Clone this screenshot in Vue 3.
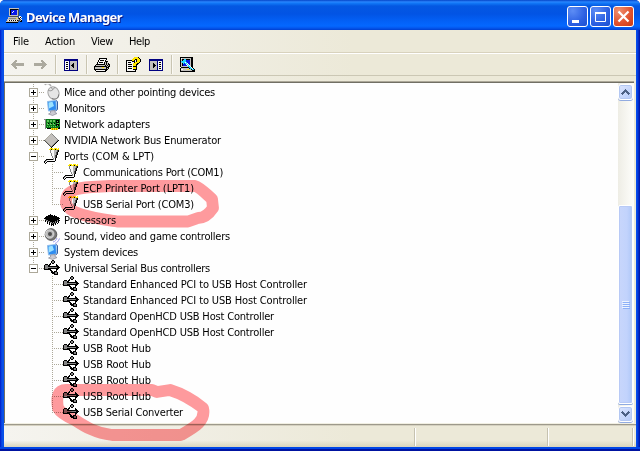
<script setup>
import { h } from 'vue'

const palette = {
  k: '#000000', g: '#858585', l: '#b8b8b8', w: '#f8f8f8', y: '#ffe600', d: '#505050',
  n: '#000080', b: '#0818e8', c: '#20d8ff', G: '#087a18', L: '#63c85c', s: '#c3c0bd', o: '#b89a00', a: '#acaa9f'
}
const grids = {
  usb: [
    '........kk......', '.......kggk.....', '.......kggk.....', '......k.kk......',
    '.kkk.kk.....k...', 'kgggkk......kk..', 'kgggkkkkkkkkkkk.', 'kggggggggggggkkk',
    'kgggkkkkkkkkkkk.', 'kkkkkkk.....kk..', '......kk....k...', '.......kk.kkk...',
    '.......kkkkggk..', '........kkkggk..', '..........kkkk..'
  ],
  port: [
    '......yyy.yyy.y.', '.....yykyyykyyy.', '......gwwwllldk.', '......gwwwllldk.',
    '......gwwwlldk..', '.......gwwlldk..', '.......gwwlldk..', '.......gwwldk...',
    '........gwldk...', '........gwldk...', '.........gwk....', '..kkkkkkkgwk....',
    '.kgwwwwwwwwk....', 'kgwkkkkkkkk.....', 'kwk.............', '.k..............'
  ],
  network: [
    '................', '................', '................', 'ggGGGGGGGGGGGGGG',
    '.gGLLGLLGLLGkkkG', '.gGLLGLLGLLGkLkG', '.gGGGGGGGGGGkkkG', '.gGLkGLkGLkGGLLG',
    '.gGLLGLLGLLGkkkG', '.gGGGGGGGGGGkLkG', '.gGLGLGLGLGLGGGG', '.gGGGGGGGGGGGGGk',
    '.g.kkkkyoyoyoykk', '.......yoyoyoy..'
  ],
  cpu: [
    '................', '................', '......k.........', '....kkkkk.k.....',
    '..kkkkkkkkkkk...', '.kkkkkkkkkkkkkk.', 'kkkkkkkkkkkkkkkk', '.gkkkkkkkkkkkkk.',
    '.kggkkkkkkkkkgkk', '.k.kggkkkkkgkgk.', '...k.kggkgkgk.k.', '...k.k.kgkgk.k..',
    '.....k.kkk.k....', '.......k.k......'
  ],
  diamond: [
    '................', '.......a........', '......asg.......', '.....asssg......',
    '....asssssg.....', '...asssssssg....', '..asssssssssg...', '.asssssssssssg..',
    'dasssssssssssgk.', '.dasssssssssgk..', '..dasssssssgk...', '...dasssssgk....',
    '....dasssgk.....', '.....dasgk......', '......dgk.......', '.......k........'
  ],
  app: [
    '...ssssssssss...', '...skkkkkkkkd...', '...skbbbbbbsd...', '...skbbwbbbsd...',
    '...skbwbbbbsd...', '...skbbbbbbsd...', '...skbbbbbbsd...', '...sssssssssd...',
    '....dddddddd.ww.', '..ssssssssssdwkw', '..sgggggggysdkw.', '.ssssssssssssddw',
    '.swkwkwkwkwkddsk', 'ssssssssssssd.kk', 'kkkkkkkkkkkk....'
  ],
  print: [
    '................', '.....kkkkkkkk...', '.....kwwwwwwk...', '....kwkkkkwk....',
    '....kwwwwwwkkk..', '...kwkkkkwksks..', '...kwwwwwwksksk.', '..kkkkkkkkkskskk',
    '.ksssssssssksksk', 'kkkkkkkkkkkkkskk', 'ksssssssyysskkk.', 'ksssssssssssksk.',
    'kkkkkkkkkkkkkk..', '.kwwwwwwwwwkk...', '..kkkkkkkkkk....'
  ],
  help: [
    '........yyyyk...', '.......yyyyyyk..', '......yyykkyyyk.', 'kkkkkkyyk.kyyyk.',
    'kwwwwwkkk.kyyyk.', 'kwkkkwwwkyyyyk..', 'kwwwwwwyyyykk...', 'kwkkkkwyyykk....',
    'kwwwwwwyyyk.....', 'kwkkkkwkkkk.....', 'kwwwwwwyyyk.....', 'kwkkkkwyyyk.....',
    'kwwwwwwkkkk.....', 'kwwwwwwwwk......', 'kkkkkkkkkk......'
  ],
  paneL: [
    'nnnnnnnnnnnnnn', 'nnnnnnnnnnnnnn', 'nwwwwnsssssssn', 'nwkkwnsssssssn', 'nwwwwnsssksssn',
    'nwkkwnsskksssn', 'nwwwwnskkksssn', 'nwkkwnsskksssn', 'nwwwwnsssksssn', 'nwkkwnsssssssn',
    'nwwwwnsssssssn', 'nnnnnnnnnnnnnn'
  ],
  paneR: [
    'nnnnnnnnnnnnnn', 'nnnnnnnnnnnnnn', 'nsssssssnwwwwn', 'nsssssssnwkkwn', 'nsssksssnwwwwn',
    'nssskkssnwkkwn', 'nssskkksnwwwwn', 'nssskkssnwkkwn', 'nsssksssnwwwwn', 'nsssssssnwkkwn',
    'nsssssssnwwwwn', 'nnnnnnnnnnnnnn'
  ],
  scan: [
    'kkkkkkkkkkkkk..', 'kwssssssssskk..', 'kskkcckkkkskk..', 'kskcccbbbbskk..',
    'kcccccbbbbskk..', 'kscccwcbbbskk..', 'kskcbccwbbskk..', 'kskbbbwcwbskk..',
    'kskbbbbwcwskk..', 'ksssssssccwkk..', '.kkkkkkkkccwk..', 'ksssssssskccwk.',
    'kwwssssyysskcck', 'kssssssssssskkk', 'kkkkkkkkkkkkkkk'
  ],
  back: [
    '....aa........', '...aaa........', '..aaa.........', '.aaaaaaaaaaaa.',
    'aaaaaaaaaaaaa.', '.aaaaaaaaaaaa.', '..aaa.........', '...aaa........', '....aa........'
  ],
  up: ['....k....', '...kkk...', '..kkkkk..', '.kkk.kkk.', 'kkk...kkk', '.k.....k.']
}
grids.forward = grids.back.map(r => [...r].reverse().join(''))
grids.down = [...grids.up].reverse()

const PixelIcon = ({ name, tint }) => {
  const rows = grids[name]
  const cells = []
  rows.forEach((row, y) => {
    let x = 0
    while (x < row.length) {
      let end = x + 1
      while (end < row.length && row[end] === row[x]) end++
      if (row[x] !== '.') cells.push(h('rect', { x, y, width: end - x, height: 1, fill: tint || palette[row[x]] }))
      x = end
    }
  })
  return h('svg', { width: rows[0].length, height: rows.length, 'shape-rendering': 'crispEdges' }, cells)
}
PixelIcon.props = ['name', 'tint']

const hub = 'Standard Enhanced PCI to USB Host Controller'
const open = 'Standard OpenHCD USB Host Controller'
const tree = [
  { t: 'Mice and other pointing devices', w: 151, i: 'mouse' },
  { t: 'Monitors', w: 41, i: 'monitor' },
  { t: 'Network adapters', w: 86, i: 'network' },
  { t: 'NVIDIA Network Bus Enumerator', w: 157, i: 'diamond' },
  {
    t: 'Ports (COM & LPT)', w: 90, i: 'port', kids: [
      { t: 'Communications Port (COM1)', w: 140 },
      { t: 'ECP Printer Port (LPT1)', w: 111 },
      { t: 'USB Serial Port (COM3)', w: 111 }
    ]
  },
  { t: 'Processors', w: 52, i: 'cpu' },
  { t: 'Sound, video and game controllers', w: 166, i: 'speaker' },
  { t: 'System devices', w: 74, i: 'monitor' },
  {
    t: 'Universal Serial Bus controllers', w: 146, i: 'usb', kids: [
      { t: hub, w: 224 }, { t: hub, w: 224 }, { t: open, w: 191 }, { t: open, w: 191 },
      { t: 'USB Root Hub', w: 68 }, { t: 'USB Root Hub', w: 68 }, { t: 'USB Root Hub', w: 68 }, { t: 'USB Root Hub', w: 68 },
      { t: 'USB Serial Converter', w: 100 }
    ]
  }
]
const menus = [{ t: 'File', w: 16 }, { t: 'Action', w: 30 }, { t: 'View', w: 22 }, { t: 'Help', w: 21 }]

// Spreads or tightens each label so it takes its nominal width.
const vFit = {
  mounted(el, { value }) {
    const natural = el.getBoundingClientRect().width
    el.style.letterSpacing = (value - natural) / el.textContent.length + 'px'
  }
}
</script>

<template>
  <div class="window">
    <header class="title">
      <PixelIcon name="app" class="app-icon" />
      <h1><span v-fit="96">Device Manager</span></h1>
      <div class="controls">
        <button class="ctl"><svg width="19" height="19"><path d="M4 13h7v3H4z" fill="#fff" /></svg></button>
        <button class="ctl"><svg width="19" height="19"><path d="M4.5 5.5h10v9h-10zM4 5.5h11M4 6.5h11" fill="none" stroke="#fff" /></svg></button>
        <button class="ctl close"><svg width="19" height="19"><path d="M4.5 4.5l10 10M14.5 4.5l-10 10" stroke="#fff" stroke-width="2.2" /></svg></button>
      </div>
    </header>

    <main class="client">
      <nav class="menu">
        <span v-for="m in menus" :key="m.t" class="menu-item"><span v-fit="m.w">{{ m.t }}</span></span>
      </nav>

      <div class="toolbar">
        <PixelIcon name="back" class="t-back" />
        <PixelIcon name="forward" class="t-forward" />
        <i class="sep" />
        <PixelIcon name="paneL" class="t-pane" />
        <i class="sep" />
        <PixelIcon name="print" class="t-print" />
        <i class="sep" />
        <PixelIcon name="help" class="t-help" />
        <PixelIcon name="paneR" class="t-props" />
        <i class="sep" />
        <PixelIcon name="scan" class="t-scan" />
      </div>

      <section class="view">
        <ul class="tree">
          <li v-for="(node, n) in tree" :key="n" class="node">
            <div class="row">
              <svg class="lead" width="15" height="16" shape-rendering="crispEdges">
                <path :d="n === tree.length - 1 ? 'M4.5 0v4' : 'M4.5 0v16'" stroke="#aca899" stroke-dasharray="1 1" />
                <path d="M10 8.5h5" stroke="#aca899" stroke-dasharray="1 1" />
                <rect x=".5" y="4.5" width="8" height="8" fill="#fff" stroke="#aca899" />
                <path :d="node.kids ? 'M2 8.5h5' : 'M2 8.5h5M4.5 6v5'" stroke="#000" />
              </svg>
              <span class="icon">
                <svg v-if="node.i === 'mouse'" width="17" height="16">
                  <path d="M1 1C2-1 5-1 7 2" fill="none" stroke="#aaa" stroke-width="1.5" />
                  <ellipse cx="9.5" cy="9" rx="5.4" ry="6.4" transform="rotate(-24 9.5 9)" fill="#e6e6e6" stroke="#a4a4a4" />
                  <path d="M4 6c3 2 5 0 7-3M7 3l2 3" fill="none" stroke="#999" />
                  <path d="M8 14.5c3 1.500 7 0 6.500-4" fill="none" stroke="#777" />
                </svg>
                <svg v-else-if="node.i === 'monitor'" width="17" height="16">
                  <path d="M3.500 1.500l8.500-1 .5 9.500-8 1z" fill="#2f8cf0" stroke="#8ebce9" />
                  <path d="M4.500 2.500l4-.8 1.500 4.300-5 2.500z" fill="#9be1ff" />
                  <path d="M12 .500l1.500 1v8l-2 1.500" fill="none" stroke="#365ea2" />
                  <path d="M6.500 11l4.500-.5v2l2 1-4.500 2-4-1.500 2-1z" fill="#cccbd2" stroke="#898996" stroke-width=".7" />
                </svg>
                <svg v-else-if="node.i === 'speaker'" width="17" height="16">
                  <circle cx="7" cy="6.5" r="5.8" fill="#777" stroke="#555" />
                  <circle cx="5.8" cy="6" r="4.2" fill="#b9b9b9" stroke="#eee" stroke-width=".7" />
                  <circle cx="6" cy="6" r="2" fill="#4d4d4d" />
                  <path d="M9 14c2-.5 3-1.500 4-4M11 15.500c2-.5 3.500-2.500 4.500-5" fill="none" stroke="#9b9bed" />
                </svg>
                <PixelIcon v-else :name="node.i" />
              </span>
              <span class="label"><span v-fit="node.w">{{ node.t }}</span></span>
            </div>
            <ul v-if="node.kids" class="kids">
              <li v-for="(kid, k) in node.kids" :key="k" class="row">
                <svg class="lead" width="34" height="16" shape-rendering="crispEdges">
                  <path v-if="n < tree.length - 1" d="M4.5 0v16" stroke="#aca899" stroke-dasharray="1 1" />
                  <path :d="k === node.kids.length - 1 ? 'M23.5 0v9' : 'M23.5 0v16'" stroke="#aca899" stroke-dasharray="1 1" />
                  <path d="M23 8.5h11" stroke="#aca899" stroke-dasharray="1 1" />
                </svg>
                <span class="icon"><PixelIcon :name="node.i" /></span>
                <span class="label"><span v-fit="kid.w">{{ kid.t }}</span></span>
              </li>
            </ul>
          </li>
        </ul>
        <div class="scrollbar">
          <div class="sb-btn"><PixelIcon name="up" tint="#4d6185" /></div>
          <div class="track" />
          <div class="thumb"><i /><i /><i /><i /></div>
          <div class="sb-btn"><PixelIcon name="down" tint="#4d6185" /></div>
        </div>
      </section>

      <footer class="status">
        <div class="cell main" /><div class="cell mid" /><div class="cell last" />
      </footer>
    </main>

    <svg class="marks" width="640" height="451" fill="none" stroke="#ff9b9e" stroke-width="11.8" stroke-linejoin="round" stroke-linecap="round">
      <path d="M66 203C65 191 75 188 92 187L110 186H195C201 188 206 194 212 199L213 208C209 214 205 218 198 218L188 221.5H117C101 219 68 215 66 203Z" />
      <path d="M58 408C56 397 58 390 66 390H152L157 392L170 390C183 394 193 400 203 408C206 421 195 427 181 435H112C95 433 84 426 75 420C66 416 60 412 58 408Z" />
    </svg>
  </div>
</template>

<style>
body { margin: 0; }
</style>

<style scoped>
.window {
  position: relative;
  box-sizing: border-box;
  width: 640px;
  height: 451px;
  display: flex;
  flex-direction: column;
  padding: 0 4px 4px;
  overflow: hidden;
  border-radius: 5px 5px 0 0;
  background: linear-gradient(90deg, #0019c8 0, #0a4fe8 2px, #0650e8 4px, #0650e8 636px, #0548ee 637px, #0010a0 640px);
  box-shadow: inset 0 -2px #0013a0, inset 0 -4px #0046e6;
  font: 11px "DejaVu Sans Condensed", "Noto Sans", sans-serif;
  color: #000;
}
.title {
  flex: none;
  display: flex;
  align-items: center;
  height: 30px;
  margin: 0 -4px;
  padding: 2px 6px 0 6px;
  box-sizing: border-box;
  background: linear-gradient(180deg, #0545c8 0, #2a86ff 2px, #127af8 3px, #0458e2 6px, #0254e4 14px, #0362f8 22px, #0468ff 26px, #0457ee 28px, #003fd0 30px);
}
.app-icon { margin-top: -2px; }
h1 {
  flex: 1;
  margin: 0 0 0 4px;
  padding-top: 1px;
  color: #fff;
  font: bold 13px/18px "Noto Sans", sans-serif;
  text-shadow: 1px 1px #0a1883;
  white-space: nowrap;
}
.controls { display: flex; gap: 2px; }
.ctl {
  box-sizing: border-box;
  width: 21px;
  height: 21px;
  padding: 0;
  border: 1px solid #fff;
  border-radius: 3px;
  background: radial-gradient(circle at 25% 20%, #5d8df5, #2c60e2 60%, #1b4fd0);
}
.ctl svg { display: block; }
.close { background: radial-gradient(circle at 25% 20%, #f09070, #e0502c 60%, #c93a14); }
.client {
  flex: 1;
  display: flex;
  flex-direction: column;
  background: linear-gradient(90deg, #f5f4ef 0, #f1efe6 150px, #ece9d8 350px);
}
.menu {
  height: 22px;
  display: flex;
  align-items: center;
  padding-left: 9px;
  gap: 16px;
  border-bottom: 1px solid #d8d2bd;
  line-height: 16px;
}
.menu-item { white-space: nowrap; padding-top: 1px; }
.toolbar {
  height: 21px;
  display: flex;
  align-items: center;
  padding-left: 7px;
  border-top: 1px solid #fff;
  border-bottom: 1px solid #cbc7b4;
}
.toolbar svg { flex: none; }
.sep { width: 1px; height: 19px; background: #c9c5b2; box-shadow: 1px 0 #faf9f5; }
.t-forward { margin: 0 8px; }
.t-pane { margin: 0 8px 0 8px; }
.t-print { margin: 0 7px; }
.t-help { margin: 0 7px 0 8px; }
.t-props { margin-right: 8px; }
.t-scan { margin-left: 8px; }
.view {
  flex: 1;
  display: flex;
  min-height: 0;
  margin: 6px 2px 0 0;
  border: solid #716f64;
  border-width: 1px 0 0 1px;
  box-shadow: 0 -1px #aca899;
  background: #fefefe;
}
.tree {
  flex: 1;
  margin: 0;
  padding: 1px 0 0 24px;
  list-style: none;
}
.kids { margin: 0; padding: 0; list-style: none; }
.row { display: flex; height: 16px; align-items: center; }
.lead { flex: none; display: block; }
.icon { flex: none; width: 17px; height: 16px; display: flex; }
.label { margin-left: 3px; padding-top: 2px; line-height: 16px; white-space: nowrap; }
.scrollbar {
  width: 16px;
  display: flex;
  flex-direction: column;
  align-items: flex-start;
  padding: 1px 0 2px;
  background: linear-gradient(90deg, #eeede5, #fefefb);
}
.sb-btn {
  box-sizing: border-box;
  flex: none;
  width: 15px;
  height: 16px;
  display: flex;
  align-items: center;
  justify-content: center;
  border: 1px solid #fff;
  border-radius: 3px;
  background: linear-gradient(135deg, #dce6ff, #b5caf9);
  box-shadow: inset 0 0 0 1px #b3c7f2, 0 1px #92abe0;
}
.track { height: 105px; flex: none; }
.thumb {
  box-sizing: border-box;
  flex: 1;
  width: 15px;
  margin-bottom: 2px;
  display: flex;
  flex-direction: column;
  align-items: center;
  justify-content: center;
  gap: 1px;
  border: 1px solid #fff;
  border-radius: 2px;
  background: linear-gradient(90deg, #c8d6fb, #c2d3fc 60%, #b0c8f8);
  box-shadow: inset 0 0 0 1px #b8caf6, 0 1px #8fabe2;
}
.thumb i { width: 7px; height: 1px; background: #eef4fe; box-shadow: 1px 1px #8cb0f8; }
.status {
  flex: none;
  box-sizing: border-box;
  height: 23px;
  display: flex;
  padding: 3px 2px 1px 0;
  border-top: 1px solid #9d998b;
  box-shadow: 0 -1px #f1efe2, inset 0 1px #d5d1c0;
  background: linear-gradient(180deg, transparent 70%, #d8d5bd);
}
.cell { border-right: 1px solid #fff; box-shadow: inset -1px 0 #c6c2b0; }
.main { width: 411px; }
.mid { width: 132px; }
.last { flex: 1; }
.marks { position: absolute; left: 0; top: 0; mix-blend-mode: multiply; pointer-events: none; }
</style>
